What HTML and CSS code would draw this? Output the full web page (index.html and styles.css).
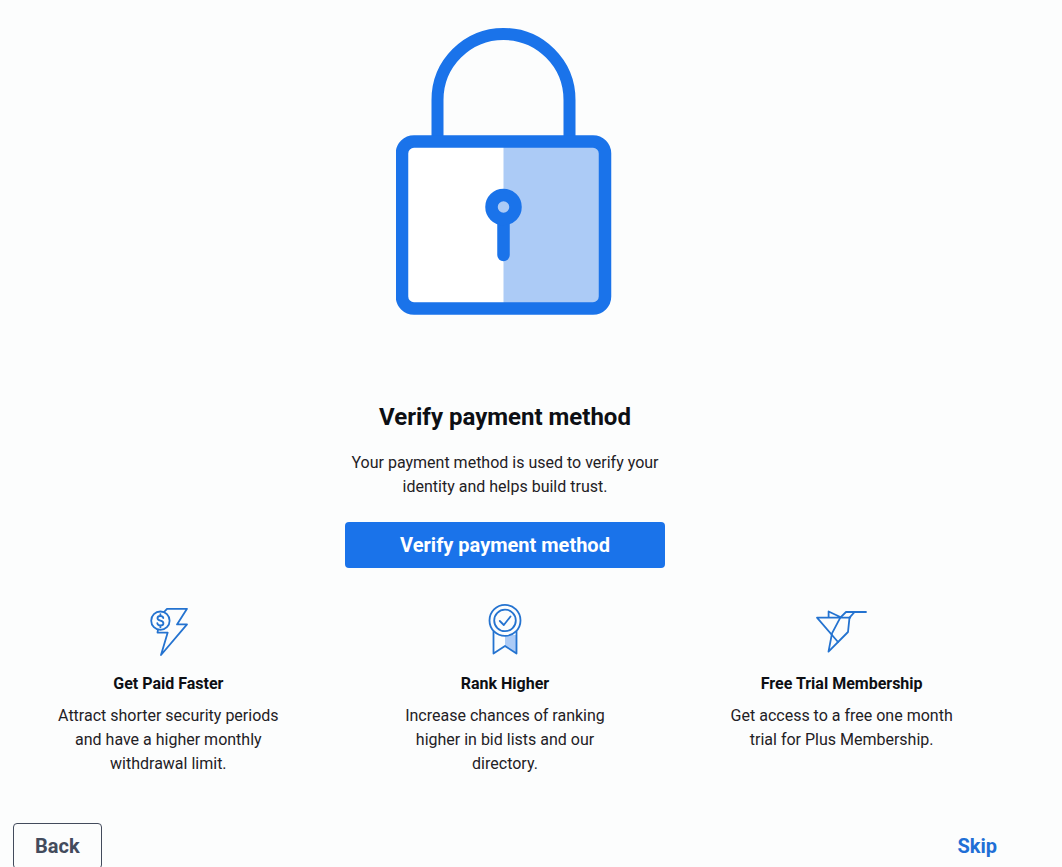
FILE: index.html
```html
<!DOCTYPE html>
<html lang="en">
<head>
  <meta charset="UTF-8">
  <meta name="viewport" content="width=device-width, initial-scale=1">
  <title>Verify payment method</title>
  <link rel="stylesheet" href="styles.css">
</head>
<body>
  <main class="page">
    <section class="verify">
      <svg class="lock" width="218" height="287" viewBox="0 0 218 287" aria-hidden="true">
        <path d="M41.500 113V72a66 66 0 0 1 132 0v41" fill="none" stroke="#1a73ea" stroke-width="12"/>
        <rect x="6" y="113.500" width="203" height="167" rx="12" fill="#fff"/>
        <path d="M107.500 113.500h101.500v167H107.500z" fill="#accbf6"/>
        <rect x="6" y="113.500" width="203" height="167" rx="12" fill="none" stroke="#1a73ea" stroke-width="12.500"/>
        <path d="M107.500 190v37" fill="none" stroke="#1a73ea" stroke-width="12.500" stroke-linecap="round"/>
        <circle cx="107.500" cy="179" r="12" fill="#accbf6" stroke="#1a73ea" stroke-width="12.500"/>
      </svg>
      <h1>Verify payment method</h1>
      <p>Your payment method is used to verify your identity and helps build trust.</p>
      <button type="button" class="btn btn-primary">Verify payment method</button>
    </section>

    <section class="benefits">
      <div class="benefit">
        <svg class="icon" width="56" height="56" viewBox="0 0 56 56" aria-hidden="true">
          <path d="M24 10l3-3.200h20L37 22.400h10L21 53l6.700-22.400H17.500l.5-3"/>
          <circle cx="20.400" cy="18.700" r="9.200"/>
          <path d="M23.300 16c-.3-1.400-1.400-2-2.900-2-1.700 0-2.900.9-2.900 2.300 0 3.200 5.900 1.600 5.900 4.900 0 1.400-1.200 2.300-3 2.300-1.700 0-2.900-.8-3.100-2.300M20.400 12.200V14M20.400 23.500v1.900"/>
        </svg>
        <h2>Get Paid Faster</h2>
        <p>Attract shorter security periods and have a higher monthly withdrawal limit.</p>
      </div>
      <div class="benefit">
        <svg class="icon" width="56" height="56" viewBox="0 0 56 56" aria-hidden="true">
          <path class="shade" d="M28 33h11.500v18.500L28 44z"/>
          <path d="M16.500 29.500v22L28 44l11.500 7.500v-22"/>
          <circle cx="28" cy="18.400" r="15.500"/>
          <circle cx="28" cy="18.400" r="10.800"/>
          <path d="M22.800 19l4 4 6.700-8.500"/>
        </svg>
        <h2>Rank Higher</h2>
        <p>Increase chances of ranking higher in bid lists and our directory.</p>
      </div>
      <div class="benefit">
        <svg class="icon" width="56" height="56" viewBox="0 0 56 56" aria-hidden="true">
          <path d="M24 40L3 15.700h33.300M14.600 15.700V9.500l11.700 5.500"/>
          <path d="M52 10H32L26.300 15.700 18 31.300 14.500 49.700 34 30l1.500-14.300L40.600 10"/>
        </svg>
        <h2>Free Trial Membership</h2>
        <p>Get access to a free one month trial for Plus Membership.</p>
      </div>
    </section>

    <footer class="actions">
      <button type="button" class="btn btn-back">Back</button>
      <button type="button" class="btn btn-skip">Skip</button>
    </footer>
  </main>
</body>
</html>
```

FILE: styles.css
```css
* {
  box-sizing: border-box;
}

body {
  margin: 0;
  background: #fcfdfd;
  color: #1f2125;
  font-family: Roboto, "Liberation Sans", sans-serif;
  font-size: 16px;
  line-height: 24px;
}

h1, h2, p {
  margin: 0;
}

.page {
  padding: 28px 52px 0 0;
}

.verify {
  display: flex;
  flex-direction: column;
  align-items: center;
  text-align: center;
}

.verify h1 {
  margin: 86px 0 18px;
  color: #0d0f14;
  font-size: 24px;
  line-height: 32px;
}

.verify p {
  max-width: 320px;
  margin-bottom: 23px;
}

.btn {
  height: 46px;
  padding: 0 21px;
  border: none;
  border-radius: 4px;
  background: none;
  font-family: inherit;
  font-size: 20px;
  font-weight: bold;
  cursor: pointer;
}

.btn-primary {
  width: 320px;
  background: #1a73ea;
  color: #fff;
}

.benefits {
  display: grid;
  grid-template-columns: repeat(3, 1fr);
  margin-top: 34px;
  text-align: center;
}

.benefit {
  display: flex;
  flex-direction: column;
  align-items: center;
}

.benefit h2 {
  margin: 14px 0 8px;
  color: #0d0f14;
  font-size: 16px;
  line-height: 24px;
}

.benefit p {
  max-width: 240px;
}

.icon {
  fill: none;
  stroke: #2473d0;
  stroke-width: 1.8;
  stroke-linejoin: round;
  stroke-linecap: round;
}

.icon .shade {
  fill: #accbf6;
  stroke: none;
}

.actions {
  display: flex;
  justify-content: space-between;
  margin-top: 47px;
  padding: 0 13px;
}

.btn-back {
  border: 1px solid #434b5c;
  color: #434b5c;
}

.btn-skip {
  padding: 0;
  color: #1f6fd6;
}
```
